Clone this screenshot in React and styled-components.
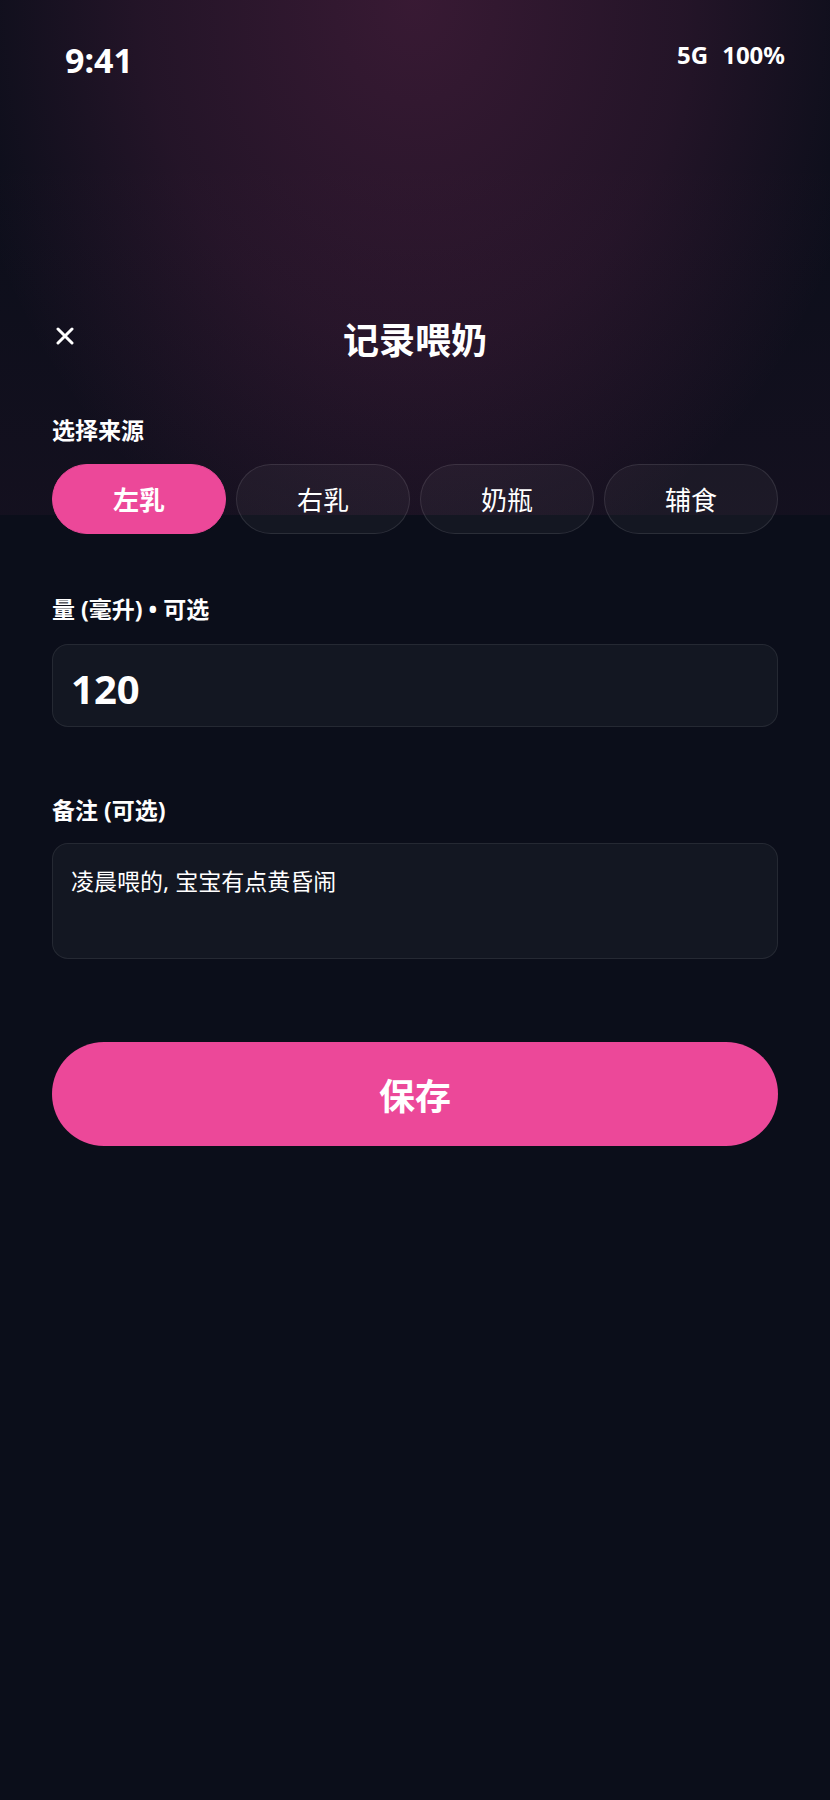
import React, { useState } from 'react';
import styled, { createGlobalStyle } from 'styled-components';

const GlobalStyle = createGlobalStyle`
  html, body {
    margin: 0;
    background: #0b0e1a;
  }
  * {
    box-sizing: border-box;
  }
`;

const FONT = `"Noto Sans", "Noto Sans CJK SC", sans-serif`;

// pink glow behind the top part of the sheet, cut off sharply at 515px
const Screen = styled.div`
  min-height: 1800px;
  width: 830px;
  font-family: ${FONT};
  color: #fff;
  background:
    radial-gradient(ellipse 56% 115% at 50% 0%, rgba(236, 72, 153, 0.2), rgba(236, 72, 153, 0.11) 58%, rgba(236, 72, 153, 0) 100%) top / 100% 515px no-repeat,
    linear-gradient(to bottom, rgba(236, 72, 153, 0) 30%, rgba(236, 72, 153, 0.04)) top / 100% 515px no-repeat,
    #0b0e1a;
`;

const StatusBar = styled.div`
  display: flex;
  justify-content: space-between;
  align-items: flex-start;
  padding: 40px 45px 0 65px;
  height: 80px;
`;

const Time = styled.span`
  font-size: 34px;
  font-weight: 700;
  line-height: 40px;
`;

const Indicators = styled.div`
  display: flex;
  gap: 14px;
  font-size: 24px;
  font-weight: 700;
  line-height: 30px;
`;

const Header = styled.div`
  display: grid;
  grid-template-columns: 1fr auto 1fr;
  align-items: center;
  margin-top: 239px;
  padding: 0 52px;
  height: 44px;
`;

const CloseButton = styled.button`
  justify-self: start;
  display: flex;
  align-items: center;
  justify-content: center;
  width: 30px;
  height: 30px;
  margin-left: -2px;
  margin-top: -10px;
  padding: 0;
  border: none;
  background: none;
  color: #fff;
  cursor: pointer;
`;

const Title = styled.h1`
  margin: 0;
  font-size: 36px;
  font-weight: 700;
  line-height: 44px;
`;

const Form = styled.div`
  display: flex;
  flex-direction: column;
  padding: 0 52px;
`;

const Section = styled.div`
  display: flex;
  flex-direction: column;
  gap: ${p => p.$gap}px;
  margin-top: ${p => p.$top}px;
`;

const Label = styled.div`
  font-size: 23px;
  font-weight: 700;
  line-height: 32px;
`;

const Chips = styled.div`
  display: grid;
  grid-template-columns: repeat(4, 1fr);
  gap: 10px;
`;

const Chip = styled.button`
  height: 70px;
  border-radius: 35px;
  font-family: ${FONT};
  font-size: 26px;
  color: #fff;
  cursor: pointer;
  font-weight: ${p => (p.$active ? 700 : 400)};
  background: ${p => (p.$active ? '#ec4899' : 'rgba(255, 255, 255, 0.04)')};
  border: 1px solid ${p => (p.$active ? '#ec4899' : 'rgba(255, 255, 255, 0.1)')};
`;

const AmountInput = styled.input`
  height: 83px;
  width: 100%;
  padding: 6px 18px 0;
  border-radius: 16px;
  border: 1px solid rgba(255, 255, 255, 0.08);
  background: #131722;
  color: #fff;
  font-family: ${FONT};
  font-size: 40px;
  font-weight: 700;
  outline: none;
`;

const NoteInput = styled.textarea`
  height: 116px;
  width: 100%;
  padding: 20px 18px;
  border-radius: 16px;
  border: 1px solid rgba(255, 255, 255, 0.08);
  background: #131722;
  color: #fff;
  font-family: ${FONT};
  font-size: 23px;
  line-height: 1.5;
  resize: none;
  outline: none;
`;

const SaveButton = styled.button`
  margin-top: 83px;
  height: 104px;
  width: 100%;
  border: none;
  border-radius: 52px;
  background: #ec4899;
  color: #fff;
  font-family: ${FONT};
  font-size: 36px;
  font-weight: 700;
  cursor: pointer;
`;

const SOURCES = ['左乳', '右乳', '奶瓶', '辅食'];

const CloseIcon = () => (
  <svg width="18" height="18" viewBox="0 0 18 18" fill="none">
    <path d="M2 2L16 16M16 2L2 16" stroke="currentColor" strokeWidth="3" strokeLinecap="round" />
  </svg>
);

export default function App() {
  const [source, setSource] = useState(0);

  return (
    <Screen>
      <GlobalStyle />
      <StatusBar>
        <Time>9:41</Time>
        <Indicators>
          <span>5G</span>
          <span>100%</span>
        </Indicators>
      </StatusBar>

      <Header>
        <CloseButton aria-label="关闭">
          <CloseIcon />
        </CloseButton>
        <Title>记录喂奶</Title>
        <span />
      </Header>

      <Form>
        <Section $top={51} $gap={18}>
          <Label>选择来源</Label>
          <Chips>
            {SOURCES.map((name, i) => (
              <Chip key={name} $active={source === i} onClick={() => setSource(i)}>
                {name}
              </Chip>
            ))}
          </Chips>
        </Section>

        <Section $top={59} $gap={19}>
          <Label>量 (毫升) • 可选</Label>
          <AmountInput defaultValue="120" inputMode="numeric" />
        </Section>

        <Section $top={67} $gap={17}>
          <Label>备注 (可选)</Label>
          <NoteInput defaultValue="凌晨喂的, 宝宝有点黄昏闹" />
        </Section>

        <SaveButton>保存</SaveButton>
      </Form>
    </Screen>
  );
}
